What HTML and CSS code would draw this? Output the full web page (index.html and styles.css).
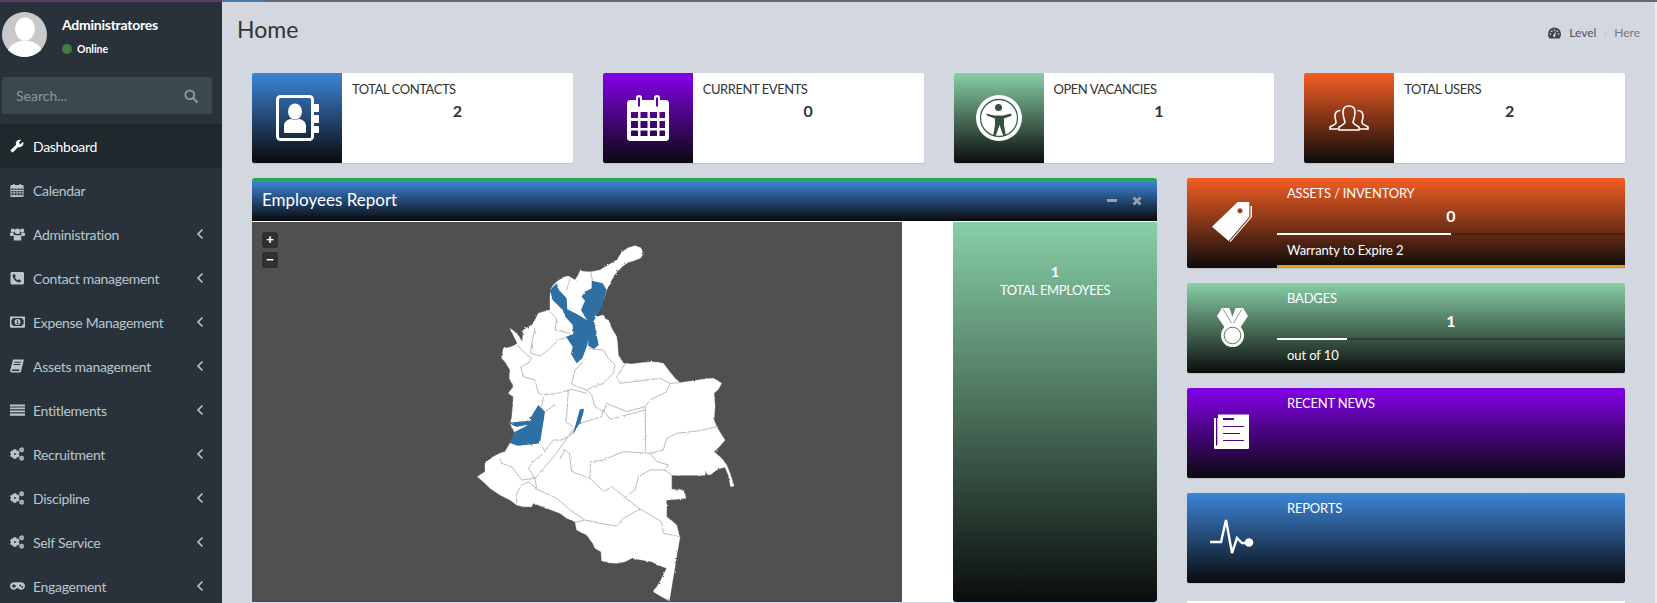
FILE: index.html
```html
<!DOCTYPE html>
<html lang="en">
<head>
<meta charset="utf-8">
<title>Home</title>
<link rel="stylesheet" href="styles.css">
</head>
<body>
<svg class="defs" width="0" height="0" aria-hidden="true">
  <symbol id="i-gear" viewBox="0 0 24 24"><path stroke="currentColor" stroke-width="2.600" d="M19.14 12.94c.04-.3.06-.61.06-.94 0-.32-.02-.64-.07-.94l2.03-1.58c.18-.14.23-.41.12-.61l-1.92-3.32c-.12-.22-.37-.29-.59-.22l-2.39.96c-.5-.38-1.03-.7-1.62-.94l-.36-2.54c-.04-.24-.24-.41-.48-.41h-3.84c-.24 0-.43.17-.47.41l-.36 2.54c-.59.24-1.13.57-1.62.94l-2.39-.96c-.22-.08-.47 0-.59.22L2.74 8.87c-.12.21-.08.47.12.61l2.03 1.58c-.05.3-.09.63-.09.94s.02.64.07.94l-2.03 1.58c-.18.14-.23.41-.12.61l1.92 3.32c.12.22.37.29.59.22l2.39-.96c.5.38 1.03.7 1.62.94l.36 2.54c.05.24.24.41.48.41h3.84c.24 0 .44-.17.47-.41l.36-2.54c.59-.24 1.13-.56 1.62-.94l2.39.96c.22.08.47 0 .59-.22l1.92-3.32c.12-.22.07-.47-.12-.61l-2.01-1.58zM12 15.6c-1.98 0-3.6-1.62-3.6-3.6s1.62-3.6 3.6-3.6 3.6 1.62 3.6 3.6-1.62 3.6-3.6 3.6z"/></symbol>
  <symbol id="i-cogs" viewBox="0 0 16 16"><use href="#i-gear" x="-1" y="2" width="12" height="12"/><use href="#i-gear" x="9.500" y="0" width="6.500" height="6.500"/><use href="#i-gear" x="9.500" y="9.500" width="6.500" height="6.500"/></symbol>
  <symbol id="i-chev" viewBox="0 0 10 14"><path d="M7.5 2.5L3 7l4.5 4.5" fill="none" stroke="currentColor" stroke-width="1.6"/></symbol>
  <filter id="rough" x="-5%" y="-5%" width="110%" height="110%"><feTurbulence type="fractalNoise" baseFrequency=".09" numOctaves="2" seed="4"/><feDisplacementMap in="SourceGraphic" scale="7"/></filter>
</svg>

<div class="app">
  <aside class="sidebar">
    <div class="user">
      <svg class="avatar" viewBox="0 0 45 45"><circle cx="22.5" cy="22.5" r="22.5" fill="#c9c9c9"/><clipPath id="av"><circle cx="22.5" cy="22.5" r="22.5"/></clipPath><g clip-path="url(#av)" fill="#fff"><ellipse cx="23" cy="17" rx="10" ry="11.5"/><ellipse cx="23" cy="44" rx="18.5" ry="15.5"/></g></svg>
      <div class="user-info">
        <div class="user-name">Administratores</div>
        <div class="user-status"><span class="dot"></span>Online</div>
      </div>
    </div>
    <div class="search">
      <span>Search...</span>
      <svg class="search-icon" viewBox="0 0 14 14"><circle cx="5.8" cy="5.8" r="4.4" fill="none" stroke="currentColor" stroke-width="2"/><path d="M9 9l3.8 3.8" stroke="currentColor" stroke-width="2.4" stroke-linecap="round"/></svg>
    </div>
    <nav class="menu">
      <a class="item active"><svg class="mi" viewBox="0 0 24 24"><path transform="translate(24 0) scale(-1 1)" d="M22.7 19l-9.1-9.1c.9-2.3.4-5-1.5-6.9-2-2-5-2.4-7.4-1.3L9 6 6 9 1.6 4.7C.4 7.1.9 10.1 2.9 12.1c1.9 1.9 4.6 2.4 6.9 1.5l9.1 9.1c.4.4 1 .4 1.4 0l2.3-2.3c.5-.4.5-1.1.1-1.4z"/></svg><span class="lb">Dashboard</span></a>
      <a class="item"><svg class="mi" viewBox="0 0 14 15"><path fill-rule="evenodd" d="M1 2.2h1.8V1h1.6v1.2h5.2V1h1.6v1.2H13c.5 0 1 .5 1 1V14c0 .5-.5 1-1 1H1c-.5 0-1-.5-1-1V3.200c0-.5.5-1 1-1zM1 6v1.600h2.400V6zm3.300 0v1.600h2.300V6zm3.200 0v1.600h2.300V6zm3.100 0v1.600H13V6zM1 8.500v1.700h2.400V8.500zm3.300 0v1.700h2.300V8.500zm3.200 0v1.700h2.300V8.500zm3.100 0v1.700H13V8.500zM1 11.100V13h2.400v-1.900zm3.300 0V13h2.300v-1.900zm3.200 0V13h2.300v-1.900zm3.100 0V13H13v-1.900z"/></svg><span class="lb">Calendar</span></a>
      <a class="item"><svg class="mi wide" viewBox="0 0 16 14"><circle cx="3" cy="3.200" r="2.200"/><circle cx="13" cy="3.200" r="2.200"/><circle cx="8" cy="4" r="3"/><path d="M0 6.500c0-.6 1-1 3-1 .6 0 1 .3 1 .6-.3 1-.2 2 .5 3H1c-.6 0-1-.4-1-1zM16 6.500c0-.6-1-1-3-1-.6 0-1 .3-1 .6.300 1 .2 2-.5 3H15c.6 0 1-.4 1-1zM4 9.500c0-1 .8-1.800 1.600-1.800 1.400 1 3.400 1 4.800 0 .8 0 1.600.8 1.600 1.800V13c0 .6-.5 1-1 1H5c-.5 0-1-.4-1-1z"/></svg><span class="lb">Administration</span><svg class="chev"><use href="#i-chev"/></svg></a>
      <a class="item"><svg class="mi" viewBox="0 0 14 14"><path fill-rule="evenodd" d="M2 1h10.500c.8 0 1.500.7 1.500 1.500V12c0 .8-.7 1.500-1.500 1.500H2c-.8 0-1.500-.7-1.500-1.500V2.500C.5 1.700 1.200 1 2 1zm1.500 2.200c-.6.3-.9.7-.9 1.300 0 3.300 3.500 6.800 6.800 6.800.6 0 1-.3 1.300-.9l.2-1c0-.2-1.800-1.100-2-1.100-.2 0-.8 1-1.100 1-.7 0-3-2.300-3-3 0-.3 1-.9 1-1.100 0-.2-.9-2-1.100-2z"/></svg><span class="lb">Contact management</span><svg class="chev"><use href="#i-chev"/></svg></a>
      <a class="item"><svg class="mi wide" viewBox="0 0 16 12"><path fill-rule="evenodd" d="M1 0h14c.5 0 1 .5 1 1v10c0 .5-.5 1-1 1H1c-.5 0-1-.5-1-1V1c0-.5.5-1 1-1zm2 1.800C3 3 2.500 3.500 1.500 3.500v5C2.500 8.500 3 9 3 10.200h10c0-1.200.5-1.700 1.500-1.700v-5C13.500 3.500 13 3 13 1.800zM8 2.800a3.200 3.200 0 1 1 0 6.400 3.200 3.200 0 0 1 0-6.400zM7 4.500v.8h.6v2H7v.7h2.200v-.7h-.6V4.500z"/></svg><span class="lb">Expense Management</span><svg class="chev"><use href="#i-chev"/></svg></a>
      <a class="item"><svg class="mi" viewBox="0 0 14 14"><path fill-rule="evenodd" d="M3 .5h10c.6 0 .9.500.7 1.100L11 12.500c-.2.600-.8 1-1.400 1H2c-1.200 0-2-.8-1.800-2zm1.300 2.200L4 3.800h6.800l.3-1.100zM3.600 5l-.3 1.100h6.800l.3-1.100zM2.500 10.500c-.8 0-.9 1.600 0 1.600h6.600c.2-.5.2-1.100.4-1.600z"/></svg><span class="lb">Assets management</span><svg class="chev"><use href="#i-chev"/></svg></a>
      <a class="item"><svg class="mi wide" viewBox="0 0 16 14"><path d="M0 1h16v2.200H0zM0 4.300h16v2H0zM0 7.500h16v2H0zM0 10.700h16V13H0z"/></svg><span class="lb">Entitlements</span><svg class="chev"><use href="#i-chev"/></svg></a>
      <a class="item"><svg class="mi wide"><use href="#i-cogs"/></svg><span class="lb">Recruitment</span><svg class="chev"><use href="#i-chev"/></svg></a>
      <a class="item"><svg class="mi wide"><use href="#i-cogs"/></svg><span class="lb">Discipline</span><svg class="chev"><use href="#i-chev"/></svg></a>
      <a class="item"><svg class="mi wide"><use href="#i-cogs"/></svg><span class="lb">Self Service</span><svg class="chev"><use href="#i-chev"/></svg></a>
      <a class="item"><svg class="mi wide" viewBox="0 0 16 12"><path fill-rule="evenodd" d="M4.500 2h7c2.500 0 4.500 1.800 4.500 4s-2 4-4.300 4c-1.200 0-2-.7-2.700-1.500H7c-.7.800-1.500 1.500-2.700 1.500C2 10 0 8.200 0 6s2-4 4.500-4zM3.500 4v1.300H2.200v1.400h1.300V8h1.400V6.700h1.300V5.300H4.900V4zm7.500.500a1 1 0 1 0 0 2 1 1 0 0 0 0-2zm2 1.500a1 1 0 1 0 0 2 1 1 0 0 0 0-2z"/></svg><span class="lb">Engagement</span><svg class="chev"><use href="#i-chev"/></svg></a>
    </nav>
  </aside>

  <main class="main">
    <header class="page-head">
      <h1>Home</h1>
      <div class="crumbs">
        <svg class="gauge" viewBox="0 0 14 12"><path fill-rule="evenodd" d="M7 0a7 7 0 0 1 7 7c0 1.900-.6 3.500-1.500 4.800-.1.100-.3.200-.5.200H2c-.2 0-.4-.1-.5-.2C.6 10.500 0 8.900 0 7a7 7 0 0 1 7-7zM2.600 6.200a.9.900 0 1 0 0 1.800.9.900 0 0 0 0-1.800zm1.400-3a.9.900 0 1 0 0 1.800.9.900 0 0 0 0-1.800zm3-1.200a.9.900 0 1 0 0 1.800.9.900 0 0 0 0-1.800zm3 1.200a.9.900 0 1 0 0 1.800.9.900 0 0 0 0-1.800zm1.400 3a.9.900 0 1 0 0 1.800.9.900 0 0 0 0-1.800zM8.700 3.800L6.200 7.700a1.300 1.300 0 1 0 1.700.6z"/></svg>
        <span class="crumb">Level</span><span class="sep">&gt;</span><span class="crumb here">Here</span>
      </div>
    </header>

    <section class="cards">
      <article class="card">
        <div class="card-icon g-blue">
          <svg width="43" height="46" viewBox="0 0 43 46"><rect x="1.500" y="1.500" width="35" height="43" rx="3" fill="none" stroke="#fff" stroke-width="3"/><path d="M38 9h4c.6 0 1 .4 1 1v6c0 .6-.4 1-1 1h-4zM38 20h4c.6 0 1 .4 1 1v6c0 .6-.4 1-1 1h-4zM38 31h4c.6 0 1 .4 1 1v5c0 .6-.4 1-1 1h-4z" fill="#fff"/><ellipse cx="19" cy="16.500" rx="7" ry="8" fill="#fff"/><path d="M8 37v-6c0-4 3-6.500 7-7 2.500 1 5.500 1 8 0 4 .5 7 3 7 7v6c0 .5-.5 1-1 1H9c-.5 0-1-.5-1-1z" fill="#fff"/></svg>
        </div>
        <div class="card-body"><div class="card-title">TOTAL CONTACTS</div><div class="card-num">2</div></div>
      </article>
      <article class="card">
        <div class="card-icon g-purple">
          <svg width="42" height="46" viewBox="0 0 42 46"><path fill="#fff" fill-rule="evenodd" d="M3 5h6V3a3 3 0 0 1 6 0v2h12V3a3 3 0 0 1 6 0v2h6c1.600 0 3 1.400 3 3v35c0 1.600-1.400 3-3 3H3c-1.600 0-3-1.400-3-3V8c0-1.600 1.400-3 3-3zM11 2.500v9h2v-9zM29 2.500v9h2v-9zM4 17v6h7v-6zm9.500 0v6h7v-6zm9.500 0v6h7v-6zm9.500 0v6H38v-6zM4 26v7h7v-7zm9.500 0v7h7v-7zm9.500 0v7h7v-7zm9.500 0v7H38v-7zM4 35.500V41h7v-5.500zm9.500 0V41h7v-5.500zm9.500 0V41h7v-5.500zm9.500 0V41H38v-5.500z"/></svg>
        </div>
        <div class="card-body"><div class="card-title">CURRENT EVENTS</div><div class="card-num">0</div></div>
      </article>
      <article class="card">
        <div class="card-icon g-green">
          <svg width="46" height="46" viewBox="0 0 46 46"><circle cx="23" cy="23" r="23" fill="#fff"/><circle cx="23" cy="23" r="18.500" fill="none" stroke="#3a5f4d" stroke-width="1.300"/><circle cx="22.500" cy="12.500" r="3.500" fill="#36503f"/><path d="M10 18.500l8 2h9l8-2 .7 2.200-7.700 2.700V30l2 11h-2.700l-3.800-11-3.800 11H17l2-11v-6.600l-7.700-2.700z" fill="#36503f"/></svg>
        </div>
        <div class="card-body"><div class="card-title">OPEN VACANCIES</div><div class="card-num">1</div></div>
      </article>
      <article class="card">
        <div class="card-icon g-orange">
          <svg width="40" height="26" viewBox="0 0 40 26"><g fill="none" stroke="#fff" stroke-width="1.600"><path d="M16 17c-1-3-2-5-2-10 0-4 2.500-6 6-6s6 2 6 6c0 5-1 7-2 10 0 2 3 3 6 5v3H10v-3c3-2 6-3 6-5z"/><path d="M11.500 5.500C7.500 5.500 6 8 6 11c0 3 1 4 1 7 0 1-3 2-6 4v2h8"/><path d="M28.500 5.500c4 0 5.500 2.500 5.500 5.500 0 3-1 4-1 7 0 1 3 2 6 4v2h-8"/></g></svg>
        </div>
        <div class="card-body"><div class="card-title">TOTAL USERS</div><div class="card-num">2</div></div>
      </article>
    </section>

    <section class="lower">
      <div class="report">
        <div class="report-head g-blue">
          <h2>Employees Report</h2>
          <div class="tools">
            <span class="tool-min"></span>
            <svg class="tool-x" viewBox="0 0 10 10"><path d="M1.500 1.500l7 7M8.500 1.500l-7 7" stroke="currentColor" stroke-width="2.800"/></svg>
          </div>
        </div>
        <div class="report-body">
          <div class="map">
            <div class="zoom-btns"><span class="zoom-btn">+</span><span class="zoom-btn">−</span></div>
            <svg class="map-svg" viewBox="252 222 650 380" width="650" height="380">
              <g transform="translate(460 230) scale(.33333)" filter="url(#rough)">
                <path fill="#fff" stroke="#fff" stroke-width="1" d="M550 70L542 84 522 92 505 97 490 107 470 125 455 150 440 180 432 205 425 225 412 248 405 262 418 258 430 255 437 268 445 270 455 295 470 320 473 345 475 375 490 400 515 402 545 398 575 395 610 400 625 420 645 445 660 458 700 452 735 447 760 445 785 460 775 478 762 490 765 530 762 570 770 590 785 615 795 630 778 650 762 665 785 685 800 705 812 735 822 768 812 770 805 735 795 712 782 715 770 720 750 735 740 732 737 720 735 736 680 736 635 736 635 778 670 780 678 805 650 808 620 810 620 860 650 885 655 905 660 920 645 1010 628 1112 605 1100 580 1085 600 1055 620 1015 595 1005 575 995 545 990 515 985 495 995 470 1000 445 998 425 992 423 965 405 955 398 940 380 915 350 900 345 875 320 865 300 850 260 835 220 820 215 830 190 830 170 825 150 810 120 795 90 775 70 755 52 740 75 725 75 700 100 680 120 670 135 665 150 640 165 610 150 580 155 565 158 530 160 500 145 490 160 470 148 445 150 420 135 395 125 385 130 355 150 352 165 345 172 340 150 295 170 310 187 335 190 300 215 285 225 270 235 250 250 245 270 240 270 215 270 200 272 178 280 165 290 155 310 142 325 138 345 150 355 135 360 122 380 125 395 125 420 120 445 105 470 90 487 65 505 53 525 47 542 53z"/>
                <g fill="none" stroke="#a2a2a2" stroke-width="2.200" stroke-linejoin="round">
                  <path d="M225 295L215 340 212 370 240 378 265 360 295 330 320 322"/>
                  <path d="M270 245L290 265 285 300 330 310"/>
                  <path d="M172 345L190 365 215 385 205 400 182 410 190 440 225 450 235 490 250 495 290 490 335 478 380 490"/>
                  <path d="M378 388L345 420 335 460 350 470 380 480 400 470 430 460 460 430 465 405 445 385 430 360 405 358 385 355"/>
                  <path d="M496 400L470 440 480 460 600 445 630 460 620 485 570 510 555 530 500 545 440 520 430 545 405 530 395 495 380 480"/>
                  <path d="M660 458L630 460"/>
                  <path d="M556 530V665"/>
                  <path d="M325 480L320 560 316 575 340 590"/>
                  <path d="M250 500L245 530M285 525L255 545"/>
                  <path d="M770 590L720 602 650 610 620 625 610 660 570 670 490 665 430 690 392 695 390 745 335 725 328 670 315 660"/>
                  <path d="M570 670L590 695 625 705 615 720 570 720 535 740 525 780 495 802 455 770 432 785 410 765 390 745"/>
                  <path d="M495 802L540 837 605 875 610 910 660 920"/>
                  <path d="M540 837L490 865 470 888 420 880 375 870 345 877"/>
                  <path d="M615 720L635 736"/>
                  <path d="M225 775L290 805 330 840 375 870"/>
                  <path d="M225 745L230 775 205 755 185 765 170 790 170 820"/>
                  <path d="M120 685L125 700 155 710 185 750 225 745 290 670 330 610 360 575"/>
                  <path d="M245 645L255 665 220 695 205 715 225 745"/>
                  <path d="M255 660L280 630 305 630 325 620 345 600"/>
                  <path d="M360 580L425 560 430 540 450 568 555 540"/>
                  <path d="M315 660L300 685"/>
                  <path d="M392 125L398 155"/>
                  <path d="M330 145L320 180"/>
                </g>
                <g fill="#2f6fa3">
                  <path d="M395 152L428 160 440 180 427 225 407 262 402 272 407 300 416 345 402 357 385 348 384 310 382 272 363 240 375 212 365 200 375 185 395 175z"/>
                  <path d="M290 160L270 180 278 210 308 240 316 260 338 285 340 312 318 320 338 350 333 372 350 400 367 385 382 345 387 310 384 272 352 253 322 238 320 205 297 180z"/>
                  <path d="M235 525L206 572 145 578 168 590 205 585 165 605 148 638 172 647 200 645 240 640 255 545z"/>
                  <path d="M360 538L372 536 370 548 362 575 338 615 348 580 356 550z"/>
                </g>
              </g>
            </svg>
          </div>
          <div class="map-gap"></div>
          <div class="map-side g-green">
            <div class="side-num">1</div>
            <div class="side-label">TOTAL EMPLOYEES</div>
          </div>
        </div>
      </div>

      <div class="tiles">
        <article class="tile g-orange">
          <div class="tile-icon">
            <svg width="40" height="40" viewBox="0 0 40 40"><path fill="#fff" fill-rule="evenodd" d="M25.700 0H37.300V14.700L16.700 39 0 24.700zM28 6.200a2.500 2.500 0 1 0 0 5 2.500 2.500 0 0 0 0-5z"/><path fill="#fff" d="M38.500 4H40V15L18.500 40 17.500 39.500 38.500 15z"/></svg>
          </div>
          <div class="tile-body has-line">
            <div class="tile-title">ASSETS / INVENTORY</div>
            <div class="tile-num">0</div>
            <div class="bar"><div class="bar-fill" style="width:50%"></div></div>
            <div class="tile-note">Warranty to Expire 2</div>
          </div>
        </article>
        <article class="tile g-green">
          <div class="tile-icon">
            <svg width="31" height="39" viewBox="0 0 31 39"><path fill="#fff" d="M5 0H26L31 8 23 20H8L0 8z"/><path fill="#5a8a70" d="M12.500 0H18.500L15.500 9z"/><path d="M6 1l8.500 14M25 1l-8.500 14" stroke="#5a8a70" stroke-width=".8" fill="none"/><circle cx="15.500" cy="27.500" r="11.500" fill="#fff"/><circle cx="15.500" cy="27.500" r="8.300" fill="none" stroke="#4d7763" stroke-width="1"/></svg>
          </div>
          <div class="tile-body">
            <div class="tile-title">BADGES</div>
            <div class="tile-num">1</div>
            <div class="bar"><div class="bar-fill" style="width:20%"></div></div>
            <div class="tile-note">out of 10</div>
          </div>
        </article>
        <article class="tile g-purple">
          <div class="tile-icon">
            <svg width="36" height="36" viewBox="0 0 36 36"><path d="M0 4h2v27.500h1.300V4H4V.5L35 .5v33c0 1-.6 1.500-1.500 1.500H1.500C.6 35 0 34.500 0 33.500z" fill="#fff"/><g fill="#55008f"><rect x="9" y="4" width="11" height="2"/><rect x="9" y="12" width="21" height="1"/><rect x="9" y="19" width="17" height="1"/><rect x="9" y="26" width="21" height="1"/></g></svg>
          </div>
          <div class="tile-body"><div class="tile-title">RECENT NEWS</div></div>
        </article>
        <article class="tile g-blue">
          <div class="tile-icon">
            <svg width="44" height="38" viewBox="0 0 44 38"><path d="M0 24h11L16 2l6 33 5-15 5 5h7" fill="none" stroke="#fff" stroke-width="2.400"/><circle cx="39" cy="24.500" r="4.300" fill="#fff"/></svg>
          </div>
          <div class="tile-body"><div class="tile-title">REPORTS</div></div>
        </article>
        <div class="tile-next"></div>
      </div>
    </section>
  </main>
  <div class="edge"></div>
</div>
</body>
</html>
```
FILE: styles.css
```css
* { box-sizing: border-box; }
html, body { margin: 0; padding: 0; height: 603px; overflow: hidden; }
body { font-family: "Lato", "Noto Sans", sans-serif; font-size: 14px; color: #333; background: #d3d7e0; }
.defs { position: absolute; }
.app { display: flex; width: 1657px; height: 603px; overflow: hidden; }

.sidebar { width: 222px; flex: none; height: 603px; background: #29323a; border-top: 2px solid #5b3d63; color: #b8c7ce; overflow: hidden; }
.user { display: flex; padding: 10px 0 0 2px; height: 70px; gap: 15px; }
.avatar { width: 45px; height: 45px; flex: none; }
.user-info { padding-top: 3px; }
.user-name { color: #fff; font-weight: 700; font-size: 14px; line-height: 20px; letter-spacing: -.25px; }
.user-status { display: flex; align-items: center; color: #fff; font-weight: 700; font-size: 10.5px; line-height: 16px; margin-top: 6px; gap: 5px; }
.dot { width: 10px; height: 10px; border-radius: 50%; background: #3f7d3f; }
.search { margin: 5px 10px 0 2px; height: 37px; border-radius: 3px; background: #3c4850; color: #8b969c; display: flex; align-items: center; justify-content: space-between; padding: 0 14px; font-size: 14px; }
.search-icon { width: 14px; height: 14px; color: #8b969c; }
.menu { margin-top: 10px; }
.item { height: 44px; display: flex; align-items: center; padding-left: 10px; color: #b8c7ce; position: relative; }
.item.active { background: #1f282d; color: #fff; }
.mi { width: 14px; height: 14px; fill: currentColor; flex: none; margin-right: 9px; }
.mi.wide { width: 15px; margin-right: 8px; }
.lb { font-size: 14px; letter-spacing: -.3px; }
.chev { width: 10px; height: 14px; margin-left: auto; margin-right: 17px; color: #b8c7ce; }

.main { flex: 1; min-width: 0; border-top: 2px solid; border-image: linear-gradient(90deg, #4a7aa6 0, #4a7aa6 42px, #5f6b75 42px) 1; padding: 0 32px 0 30px; }
.page-head { display: flex; justify-content: space-between; align-items: center; height: 71px; margin: 0 -15px 0 -15px; padding-bottom: 19px; padding-top: 1px; }
.page-head h1 { margin: 0; font-weight: 400; font-size: 23px; line-height: 30px; color: #333; }
.crumbs { display: flex; align-items: center; font-size: 12px; color: #555; margin-top: 8px; }
.gauge { width: 13px; height: 12px; fill: #444; margin-right: 8px; }
.sep { color: #bbb; margin: 0 6px; font-size: 10px; }
.here { color: #777; }
.cards { display: grid; grid-template-columns: repeat(4, 1fr); column-gap: 30px; }
.card { height: 90px; background: #fff; border-radius: 2px; display: flex; box-shadow: 0 1px 1px rgba(0,0,0,.1); overflow: hidden; }
.card-icon { width: 90px; flex: none; display: flex; align-items: center; justify-content: center; }
.card-body { flex: 1; padding: 7px 10px; }
.card-title { font-size: 13px; line-height: 18px; color: #333; letter-spacing: -.45px; }
.card-num { text-align: center; font-weight: 700; font-size: 16px; line-height: 24px; color: #333; margin-top: 1px; }

.g-blue { background: linear-gradient(#3c85d8, #0a0a0c); }
.g-purple { background: linear-gradient(#8300ea, #0b0a0f); }
.g-green { background: linear-gradient(#88cfa6, #0b0d0d); }
.g-orange { background: linear-gradient(#f45e24, #0d0b0b); }

.lower { display: flex; gap: 30px; margin-top: 15px; }
.report { width: 905px; flex: none; height: 424px; border-top: 3px solid #2ea35c; border-radius: 3px 3px 0 0; background: #fff; overflow: hidden; }
.report-head { height: 40px; display: flex; align-items: center; justify-content: space-between; padding: 0 15px 2px 10px; }
.report-head h2 { margin: 0; font-weight: 400; font-size: 17px; line-height: 24px; color: #fff; }
.tools { display: flex; align-items: center; gap: 15px; color: #97a0b3; margin-top: 1px; }
.tool-min { width: 10px; height: 3px; background: #97a0b3; }
.tool-x { width: 10px; height: 10px; }
.report-body { display: flex; height: 380px; margin-top: 1px; }
.map { width: 650px; flex: none; height: 380px; background: #505050; position: relative; overflow: hidden; }
.map-svg { display: block; }
.zoom-btns { position: absolute; left: 10px; top: 10px; display: flex; flex-direction: column; gap: 4px; }
.zoom-btn { width: 16px; height: 16px; border-radius: 3px; background: #303030; color: #fff; font-weight: 700; font-size: 13px; line-height: 16px; text-align: center; font-family: "Liberation Sans", sans-serif; }
.map-gap { width: 51px; flex: none; background: #fff; }
.map-side { flex: 1; border-radius: 0 0 3px 3px; color: #fff; text-align: center; padding-top: 41px; }
.side-num { font-weight: 700; font-size: 14px; line-height: 18px; }
.side-label { font-size: 13px; line-height: 19px; letter-spacing: -.4px; }

.tiles { width: 438px; flex: none; display: flex; flex-direction: column; gap: 15px; }
.tile { height: 90px; border-radius: 2px; display: flex; color: #fff; box-shadow: 0 1px 1px rgba(0,0,0,.1); overflow: hidden; flex: none; }
.tile-icon { width: 90px; flex: none; display: flex; align-items: center; justify-content: center; padding-bottom: 2px; }
.tile-body { flex: 1; height: 90px; }
.tile-body.has-line { border-bottom: 3px solid #e8991c; }
.tile-title { font-size: 13px; line-height: 18px; padding: 6px 0 0 10px; letter-spacing: -.2px; }
.tile-num { text-align: center; font-weight: 700; font-size: 16px; line-height: 22px; margin-top: 3px; }
.bar { height: 2px; background: rgba(0,0,0,.25); margin-top: 6px; }
.bar-fill { height: 100%; background: #fff; }
.tile-note { padding: 6px 0 0 10px; font-size: 13px; line-height: 18px; letter-spacing: -.1px; }
.tile-next { height: 40px; background: #fff; flex: none; margin-top: 3px; }
.edge { width: 2px; flex: none; background: #e9ebef; position: absolute; right: 0; top: 2px; height: 601px; }
```
